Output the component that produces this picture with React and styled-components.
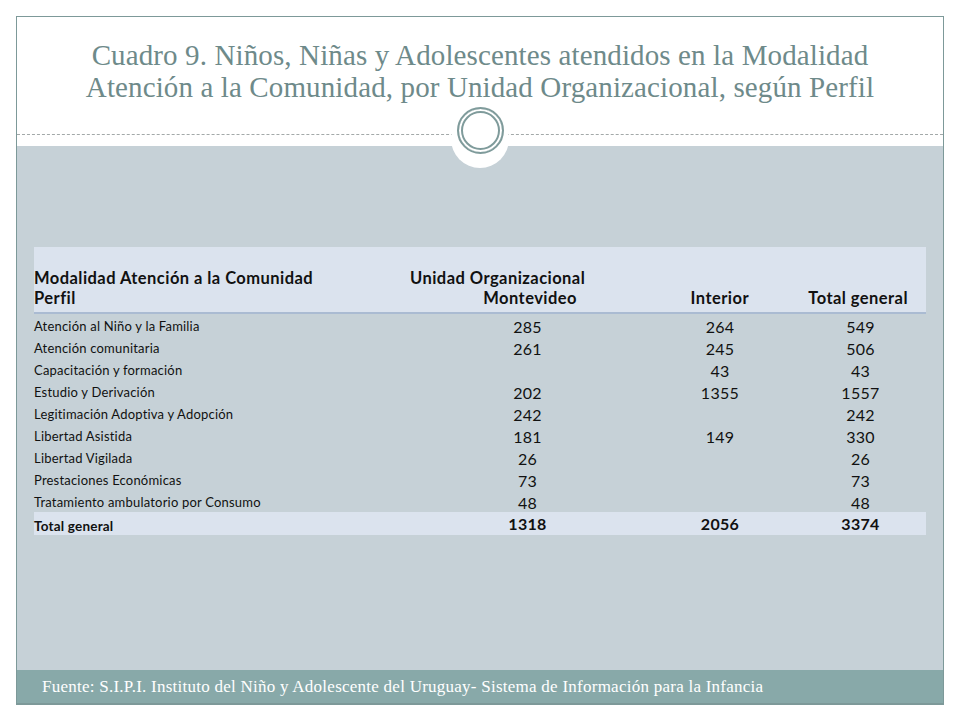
import React from "react";
import styled, { createGlobalStyle } from "styled-components";

const rows = [
  { label: "Atención al Niño y la Familia", mvd: "285", int: "264", total: "549" },
  { label: "Atención comunitaria", mvd: "261", int: "245", total: "506" },
  { label: "Capacitación y formación", mvd: "", int: "43", total: "43" },
  { label: "Estudio y Derivación", mvd: "202", int: "1355", total: "1557" },
  { label: "Legitimación Adoptiva y Adopción", mvd: "242", int: "", total: "242" },
  { label: "Libertad Asistida", mvd: "181", int: "149", total: "330" },
  { label: "Libertad Vigilada", mvd: "26", int: "", total: "26" },
  { label: "Prestaciones Económicas", mvd: "73", int: "", total: "73" },
  { label: "Tratamiento ambulatorio por Consumo", mvd: "48", int: "", total: "48" },
];

export default function App() {
  return (
    <>
      <Global />
      <Frame>
        <Header>
          <Title>
            Cuadro 9. Niños, Niñas y Adolescentes atendidos en la Modalidad
            <br />
            Atención a la Comunidad, por Unidad Organizacional, según Perfil
          </Title>
          <Divider>
            <Medallion>
              <Ring />
            </Medallion>
          </Divider>
        </Header>
        <Body>
          <Table>
            <HeadBand>
              <HeadCell>Modalidad Atención a la Comunidad</HeadCell>
              <HeadCell>Unidad Organizacional</HeadCell>
              <HeadCell />
              <HeadCell />
              <HeadCell>Perfil</HeadCell>
              <HeadCell $right $pr={68}>Montevideo</HeadCell>
              <HeadCell $right $pr={46}>Interior</HeadCell>
              <HeadCell $right $pr={18}>Total general</HeadCell>
            </HeadBand>
            {rows.map((r) => (
              <Row key={r.label}>
                <Label>{r.label}</Label>
                <Num>{r.mvd}</Num>
                <Num>{r.int}</Num>
                <Num>{r.total}</Num>
              </Row>
            ))}
            <Row $total>
              <Label $bold>Total general</Label>
              <Num $bold>1318</Num>
              <Num $bold>2056</Num>
              <Num $bold>3374</Num>
            </Row>
          </Table>
        </Body>
        <Footer>
          Fuente: S.I.P.I. Instituto del Niño y Adolescente del Uruguay- Sistema de
          Información para la Infancia
        </Footer>
      </Frame>
    </>
  );
}

const Global = createGlobalStyle`
  html, body {
    margin: 0;
    padding: 0;
    background: #ffffff;
  }
  * { box-sizing: border-box; }
`;

const Frame = styled.div`
  margin: 16px 0 0 16px;
  width: 928px;
  height: 689px;
  border: 1px solid #7d9999;
  border-bottom-width: 2px;
  display: flex;
  flex-direction: column;
  background: #fff;
`;

const Header = styled.div`
  height: 129px;
  flex: 0 0 129px;
  display: flex;
  flex-direction: column;
  align-items: center;
  background: #fff;
`;

const Title = styled.h1`
  margin: 22px 0 0;
  font-family: "Liberation Serif", serif;
  font-weight: normal;
  font-size: 29px;
  line-height: 32px;
  color: #6e8a8a;
  text-align: center;
  letter-spacing: 0.12px;
  white-space: nowrap;
`;

const Divider = styled.div`
  position: relative;
  width: 100%;
  margin-top: 31px;
  border-top: 1px dashed #a3a9a9;
  height: 0;
`;

const Medallion = styled.div`
  position: absolute;
  left: 50%;
  top: -25px;
  width: 58px;
  height: 58px;
  margin-left: -29px;
  border-radius: 50%;
  background: #fff;
  display: flex;
  align-items: flex-start;
  justify-content: center;
  z-index: 2;
`;

const Ring = styled.div`
  margin-top: -3px;
  width: 47px;
  height: 47px;
  border-radius: 50%;
  border: 2.5px solid #7f9b9b;
  box-shadow: inset 0 0 0 2px #fff, inset 0 0 0 4px #7f9b9b;
`;

const Body = styled.div`
  flex: 1;
  background: #c6d1d7;
  padding: 101px 0 0 17px;
`;

const Table = styled.div`
  width: 892px;
  font-family: Lato, "Liberation Sans", sans-serif;
  color: #111;
`;

const cols = "376px 235px 150px 131px";

const HeadBand = styled.div`
  display: grid;
  grid-template-columns: ${cols};
  grid-template-rows: 20px 20px;
  align-content: end;
  height: 67px;
  padding-bottom: 4px;
  background: #dbe3ee;
  border-bottom: 2px solid #aabbd2;
`;

const HeadCell = styled.div`
  font-size: 16.5px;
  font-weight: bold;
  line-height: 20px;
  letter-spacing: 0.45px;
  white-space: nowrap;
  text-align: ${({ $right }) => ($right ? "right" : "left")};
  padding-right: ${({ $pr }) => ($pr ? $pr : 0)}px;
`;

const Row = styled.div`
  display: grid;
  grid-template-columns: ${cols};
  align-items: end;
  height: ${({ $total }) => ($total ? "23px" : "22px")};
  background: ${({ $total }) => ($total ? "#dbe3ee" : "transparent")};
`;

const Label = styled.div`
  font-size: ${({ $bold }) => ($bold ? "13.5px" : "13px")};
  font-weight: ${({ $bold }) => ($bold ? "bold" : "normal")};
  letter-spacing: 0.2px;
  line-height: 16px;
  padding-bottom: ${({ $bold }) => ($bold ? "1px" : "2px")};
  white-space: nowrap;
`;

const Num = styled.div`
  font-size: 16px;
  font-weight: ${({ $bold }) => ($bold ? "bold" : "normal")};
  letter-spacing: 0.3px;
  line-height: 18px;
  padding-bottom: ${({ $bold }) => ($bold ? "2px" : "0")};
  text-align: center;
`;

const Footer = styled.div`
  flex: 0 0 33px;
  height: 33px;
  background: #88a9a9;
  color: #fff;
  font-family: "Liberation Serif", serif;
  font-size: 17px;
  line-height: 33px;
  padding-left: 25px;
  letter-spacing: 0.25px;
  white-space: nowrap;
`;
